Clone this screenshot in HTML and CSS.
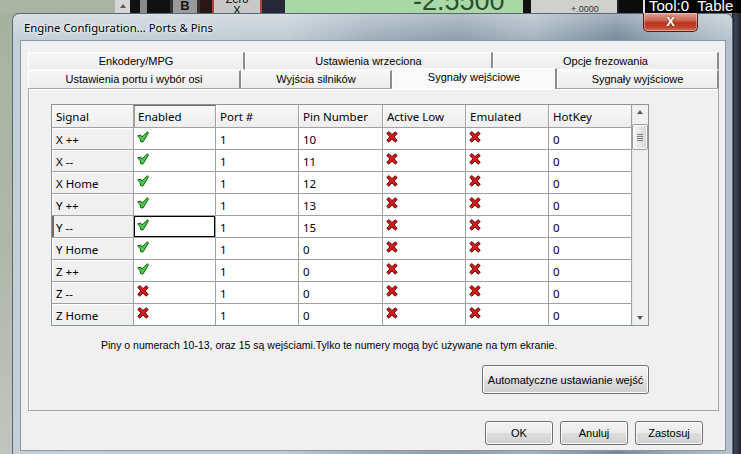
FILE: index.html
```html
<!DOCTYPE html>
<html lang="pl">
<head>
    <meta charset="UTF-8" />
    <title>Engine Configuration... Ports &amp; Pins</title>
    <link rel="stylesheet" href="styles.css">
</head>
<body>

    <svg class="defs" width="0" height="0">
        <symbol id="tick" viewBox="0 0 12 12">
            <path d="M0.7 4.8 L3.8 4.1 L5 6.1 L10.5 0.7 L11.4 2.1 L6 10.9 L3.9 10.9 L2.9 7.3 Z" fill="#45d045" stroke="#1c5a1c" stroke-width="1" stroke-linejoin="round"/>
        </symbol>
        <symbol id="cross" viewBox="0 0 12 12">
            <path d="M0.8 2.4 L3 0.6 L6 3.6 L9.2 0.8 L11.2 2.6 L8.2 5.8 L11.2 9.4 L9 11.2 L6 8 L2.8 11.2 L0.8 9.4 L3.8 5.8 Z" fill="#d41c1c" stroke="#5c0c0c" stroke-width="1" stroke-linejoin="round"/>
        </symbol>
    </svg>

    <!-- Pulpit za oknem dialogu -->
    <div class="strip">
        <div class="s-green"></div>
        <div class="s-dark"><span class="s-arrow"></span></div>
        <div class="s-btn-b">B</div>
        <div class="s-dark2"></div>
        <div class="s-zero"><span>Zero</span><span>X</span></div>
        <div class="s-navy"></div>
        <div class="s-lcd"><span>-2.5500</span></div>
        <div class="s-black"></div>
        <div class="s-gray"><span>+.0000</span></div>
        <div class="s-black2"></div>
        <div class="s-tool"><span>Tool:0 &nbsp;Table</span></div>
    </div>
    <div class="side-right"></div>

    <div class="window">
        <div class="titlebar">
            <span class="title">Engine Configuration... Ports &amp; Pins</span>
        </div>
        <div class="close">X</div>

        <div class="client">
            <div class="tab-row back">
                <div class="tab" style="width:217px">Enkodery/MPG</div>
                <div class="tab" style="width:248px">Ustawienia wrzeciona</div>
                <div class="tab" style="width:226px">Opcje frezowania</div>
            </div>
            <div class="tab-row front">
                <div class="tab" style="width:213px">Ustawienia portu i wybór osi</div>
                <div class="tab" style="width:151px">Wyjścia silników</div>
                <div class="tab active" style="width:165px">Sygnały wejściowe</div>
                <div class="tab" style="width:162px">Sygnały wyjściowe</div>
            </div>

            <div class="panel">
                <div class="grid">
                    <div class="cells">
                        <div class="hd">Signal</div>
                        <div class="hd sel-col">Enabled</div>
                        <div class="hd">Port #</div>
                        <div class="hd">Pin Number</div>
                        <div class="hd">Active Low</div>
                        <div class="hd">Emulated</div>
                        <div class="hd">HotKey</div>

                        <div class="rh">X ++</div>
                        <div class="c ic"><svg class="ico"><use href="#tick"/></svg></div>
                        <div class="c">1</div>
                        <div class="c">10</div>
                        <div class="c ic"><svg class="ico"><use href="#cross"/></svg></div>
                        <div class="c ic"><svg class="ico"><use href="#cross"/></svg></div>
                        <div class="c">0</div>

                        <div class="rh">X --</div>
                        <div class="c ic"><svg class="ico"><use href="#tick"/></svg></div>
                        <div class="c">1</div>
                        <div class="c">11</div>
                        <div class="c ic"><svg class="ico"><use href="#cross"/></svg></div>
                        <div class="c ic"><svg class="ico"><use href="#cross"/></svg></div>
                        <div class="c">0</div>

                        <div class="rh">X Home</div>
                        <div class="c ic"><svg class="ico"><use href="#tick"/></svg></div>
                        <div class="c">1</div>
                        <div class="c">12</div>
                        <div class="c ic"><svg class="ico"><use href="#cross"/></svg></div>
                        <div class="c ic"><svg class="ico"><use href="#cross"/></svg></div>
                        <div class="c">0</div>

                        <div class="rh">Y ++</div>
                        <div class="c ic"><svg class="ico"><use href="#tick"/></svg></div>
                        <div class="c">1</div>
                        <div class="c">13</div>
                        <div class="c ic"><svg class="ico"><use href="#cross"/></svg></div>
                        <div class="c ic"><svg class="ico"><use href="#cross"/></svg></div>
                        <div class="c">0</div>

                        <div class="rh current">Y --</div>
                        <div class="c ic focus"><svg class="ico"><use href="#tick"/></svg></div>
                        <div class="c">1</div>
                        <div class="c">15</div>
                        <div class="c ic"><svg class="ico"><use href="#cross"/></svg></div>
                        <div class="c ic"><svg class="ico"><use href="#cross"/></svg></div>
                        <div class="c">0</div>

                        <div class="rh">Y Home</div>
                        <div class="c ic"><svg class="ico"><use href="#tick"/></svg></div>
                        <div class="c">1</div>
                        <div class="c">0</div>
                        <div class="c ic"><svg class="ico"><use href="#cross"/></svg></div>
                        <div class="c ic"><svg class="ico"><use href="#cross"/></svg></div>
                        <div class="c">0</div>

                        <div class="rh">Z ++</div>
                        <div class="c ic"><svg class="ico"><use href="#tick"/></svg></div>
                        <div class="c">1</div>
                        <div class="c">0</div>
                        <div class="c ic"><svg class="ico"><use href="#cross"/></svg></div>
                        <div class="c ic"><svg class="ico"><use href="#cross"/></svg></div>
                        <div class="c">0</div>

                        <div class="rh">Z --</div>
                        <div class="c ic"><svg class="ico"><use href="#cross"/></svg></div>
                        <div class="c">1</div>
                        <div class="c">0</div>
                        <div class="c ic"><svg class="ico"><use href="#cross"/></svg></div>
                        <div class="c ic"><svg class="ico"><use href="#cross"/></svg></div>
                        <div class="c">0</div>

                        <div class="rh">Z Home</div>
                        <div class="c ic"><svg class="ico"><use href="#cross"/></svg></div>
                        <div class="c">1</div>
                        <div class="c">0</div>
                        <div class="c ic"><svg class="ico"><use href="#cross"/></svg></div>
                        <div class="c ic"><svg class="ico"><use href="#cross"/></svg></div>
                        <div class="c">0</div>
                    </div>

                    <div class="scroll">
                        <div class="sb-btn"><span class="tri up"></span></div>
                        <div class="thumb"><span></span><span></span><span></span><span></span></div>
                        <div class="sb-track"></div>
                        <div class="sb-btn"><span class="tri down"></span></div>
                    </div>
                </div>

                <p class="note">Piny o numerach 10-13, oraz 15 są wejściami.Tylko te numery mogą być używane na tym ekranie.</p>

                <div class="auto-row">
                    <button type="button" class="win-btn auto">Automatyczne ustawianie wejść</button>
                </div>
            </div>

            <div class="dialog-buttons">
                <button type="button" class="win-btn">OK</button>
                <button type="button" class="win-btn">Anuluj</button>
                <button type="button" class="win-btn">Zastosuj</button>
            </div>
        </div>
    </div>

</body>
</html>
```

FILE: styles.css
```css
/* Reset */
* {
    margin: 0;
    padding: 0;
    box-sizing: border-box;
}

body {
    width: 741px;
    height: 454px;
    overflow: hidden;
    position: relative;
    background: linear-gradient(180deg, #a6b1a0 0%, #afb7aa 55%, #c2c5bf 100%);
    font-family: "Liberation Sans", Arial, sans-serif;
    font-size: 11px;
    color: #000;
}

.defs {
    position: absolute;
}

/* Pasek aplikacji za oknem */
.strip {
    display: flex;
    height: 13px;
}

.strip > div {
    flex: none;
    height: 13px;
    overflow: hidden;
}

.s-green { width: 115px; background: #a9b4a3; }

.s-dark {
    width: 55px;
    background: linear-gradient(90deg, #d6d6d6 0, #d6d6d6 15px, #111 15px, #111 25px, #8a8a8a 25px, #8a8a8a 32px, #111 32px);
    position: relative;
}

.s-arrow {
    position: absolute;
    left: 5px;
    top: 4px;
    border-left: 3px solid transparent;
    border-right: 3px solid transparent;
    border-bottom: 4px solid #555;
}

.s-btn-b {
    width: 30px;
    background: #9a9a9a;
    border-left: 3px solid #333;
    border-right: 3px solid #333;
    font-weight: bold;
    font-size: 13px;
    line-height: 12px;
    text-align: center;
    color: #111;
}

.s-dark2 { width: 12px; background: #2a1616; }

.s-zero {
    width: 50px;
    background: #c8c8c8;
    border-left: 2px solid #b8403a;
    border-right: 2px solid #b8403a;
    display: flex;
    flex-direction: column;
    align-items: center;
    font-size: 11px;
    line-height: 11px;
}

.s-zero span:first-child { margin-top: -6px; }

.s-navy { width: 23px; background: #262838; }

.s-lcd {
    width: 238px;
    background: #a9d7a5;
    color: #2c4f2c;
    font-size: 27px;
    line-height: 20px;
    padding-left: 128px;
}

.s-lcd span {
    display: block;
    margin-top: -9px;
}

.s-black { width: 8px; background: #111; }

.s-gray {
    width: 88px;
    background: #d0d0cc;
    border-right: 2px solid #222;
    font-size: 9px;
    padding-left: 40px;
    color: #333;
}

.s-gray span {
    display: block;
    margin-top: 4px;
}

.s-black2 {
    width: 24px;
    background: #0c0c0c;
}

.s-tool {
    width: 98px;
    background: #050505;
    border-left: 2px solid #ddd;
    color: #fff;
    font-size: 15px;
    line-height: 16px;
    padding-left: 4px;
}

.s-tool span {
    display: block;
    margin-top: -2px;
}

.side-right {
    position: absolute;
    right: 0;
    top: 13px;
    width: 9px;
    height: 441px;
    background: linear-gradient(90deg, #1c2028, #3a4656 40%, #222 100%);
}

/* Okno dialogu */
.window {
    position: absolute;
    left: 12px;
    top: 13px;
    width: 721px;
    height: 445px;
    border: 1px solid #5a6672;
    border-bottom: none;
    border-radius: 7px 7px 0 0;
    padding: 0 6px 0 7px;
    background:
        linear-gradient(180deg, rgba(255,255,255,0.35), rgba(255,255,255,0) 27px),
        linear-gradient(90deg, #c3ced7 0%, #bfcad3 38%, #9eacb9 50%, #8d9cab 62%, #a6b3bf 72%, #75889a 84%, #93a3b2 90%, #b6c3cd 100%);
}

.titlebar {
    height: 26px;
    display: flex;
    align-items: center;
}

.title {
    font-family: "Noto Sans", sans-serif;
    font-size: 11.3px;
    margin-left: 4px;
    margin-top: 1px;
    text-shadow: 0 0 6px rgba(255,255,255,0.9), 0 0 3px rgba(255,255,255,0.9);
}

.close {
    position: absolute;
    top: -1px;
    right: 34px;
    width: 55px;
    height: 19px;
    border: 1px solid #4c1e16;
    border-top: none;
    border-radius: 0 0 5px 5px;
    background: linear-gradient(180deg, #e4a091 0%, #cf6a55 40%, #b8331d 55%, #c2452b 80%, #d9735b 100%);
    box-shadow: inset 0 0 0 1px rgba(255,255,255,0.35);
    color: #fff;
    font-weight: bold;
    font-size: 13px;
    line-height: 18px;
    text-align: center;
    text-shadow: 0 0 2px #5a1a10;
}

.client {
    height: 411px;
    background: #f0f0f0;
    border: 1px solid #8996a3;
    padding: 11px 6px 0 7px;
}

/* Zakladki */
.tab-row {
    display: flex;
    height: 18px;
}

.tab-row.front {
    align-items: flex-end;
}

.tab {
    flex: none;
    height: 18px;
    border-top: 1px solid #fff;
    border-left: 1px solid #fff;
    border-right: 2px solid #8c8c8c;
    background: linear-gradient(180deg, #f6f6f6, #ececec);
    text-align: center;
    line-height: 17px;
    white-space: nowrap;
}

.tab-row.back .tab {
    border-bottom: 1px solid #fafafa;
}

.tab.active {
    height: 21px;
    margin-bottom: -1px;
    background: #f9f9f9;
    position: relative;
    z-index: 1;
    line-height: 17px;
}

.panel {
    width: 691px;
    height: 323px;
    border: 1px solid #a5a5a5;
    box-shadow: inset 1px 1px 0 #fff;
    padding: 15px 0 0 22px;
}

/* Tabela sygnalow */
.grid {
    width: 598px;
    height: 222px;
    border: 1px solid #8e929a;
    display: flex;
    background: #fff;
}

.cells {
    width: 580px;
    display: grid;
    grid-template-columns: 82px 82px 83px 84px 83px 83px 83px;
    grid-template-rows: 23px repeat(8, 22px) 21px;
    font-family: "Noto Sans", sans-serif;
    font-size: 11.5px;
}

.cells > div {
    border-right: 1px solid #a0a0a0;
    border-bottom: 1px solid #a0a0a0;
    display: flex;
    align-items: center;
    padding-left: 4px;
    padding-top: 1px;
    white-space: nowrap;
}

.cells > div:nth-last-child(-n+7) {
    border-bottom: none;
}

.hd {
    background: linear-gradient(180deg, #f7f7f7, #eeeeee);
    box-shadow: inset 1px 0 0 #fff;
}

.hd.sel-col {
    box-shadow: inset 0 1px 0 #6a6a6a, inset 1px 0 0 #9a9a9a;
}

.rh {
    background: #f0f0f0;
    box-shadow: inset 1px 1px 0 #fff;
}

.rh.current {
    box-shadow: inset 2px 0 0 #6a6a6a;
}

.c.ic {
    align-items: flex-start;
    padding-left: 3px;
    padding-top: 3px;
}

.c.focus {
    box-shadow: inset 0 0 0 1px #000;
}

.ico {
    width: 12px;
    height: 12px;
}

.scroll {
    width: 16px;
    display: flex;
    flex-direction: column;
    background: #f0f0f0;
    box-shadow: inset 1px 0 0 #e6e6e6;
}

.sb-btn {
    height: 17px;
    display: flex;
    align-items: center;
    justify-content: center;
}

.tri {
    border-left: 3px solid transparent;
    border-right: 3px solid transparent;
}

.tri.up {
    border-bottom: 4px solid #5c5c5c;
    margin-top: -3px;
}

.tri.down {
    border-top: 4px solid #5c5c5c;
    margin-top: 3px;
}

.thumb {
    height: 26px;
    margin: 2px 0 0 0;
    border: 1px solid #9a9a9a;
    border-radius: 2px;
    background: linear-gradient(90deg, #f6f6f6, #e6e6e6 50%, #d6d6d6);
    box-shadow: inset 0 0 0 1px #fbfbfb;
    display: flex;
    flex-direction: column;
    align-items: center;
    justify-content: center;
    gap: 1px;
}

.thumb span {
    width: 6px;
    height: 1px;
    background: #7a7a7a;
}

.sb-track {
    flex: 1;
}

.note {
    margin: 13px 0 0 50px;
    font-size: 10.5px;
    line-height: 13px;
    white-space: nowrap;
}

.auto-row {
    width: 598px;
    display: flex;
    justify-content: flex-end;
    margin-top: 13px;
}

.win-btn {
    font-family: "Liberation Sans", Arial, sans-serif;
    font-size: 11px;
    color: #000;
    width: 68px;
    height: 24px;
    border: 1px solid #707070;
    border-radius: 3px;
    background: linear-gradient(180deg, #f2f2f2 0%, #ebebeb 48%, #dddddd 52%, #cfcfcf 100%);
    box-shadow: inset 0 0 0 1px #fcfcfc;
}

.win-btn.auto {
    width: 167px;
    height: 29px;
}

.dialog-buttons {
    display: flex;
    justify-content: flex-end;
    gap: 7px;
    margin-top: 10px;
    padding-right: 16px;
}
```
